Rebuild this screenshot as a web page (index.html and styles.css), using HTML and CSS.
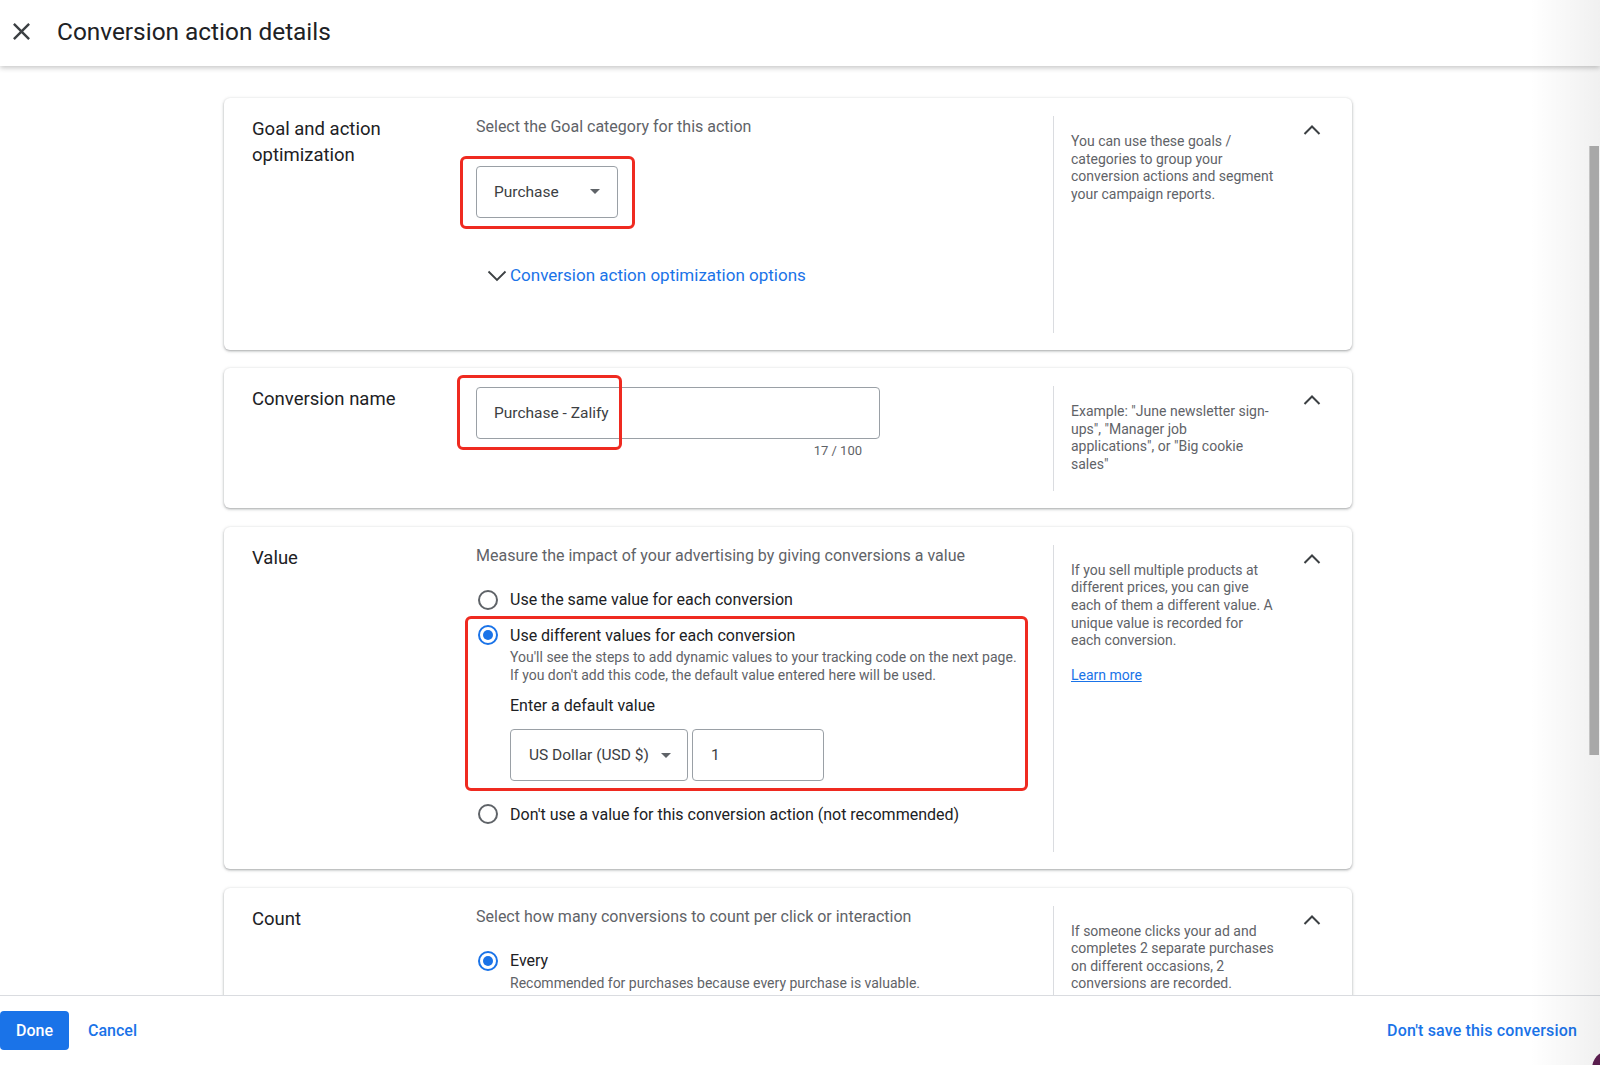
FILE: index.html
```html
<!DOCTYPE html>
<html lang="en">
<head>
<meta charset="utf-8">
<title>Conversion action details</title>
<link rel="stylesheet" href="styles.css">
</head>
<body>
<div class="app">
  <header class="topbar">
    <button class="close" aria-label="Close">
      <svg width="29" height="29" viewBox="0 0 24 24"><path d="M19 6.41L17.59 5 12 10.59 6.41 5 5 6.41 10.59 12 5 17.59 6.41 19 12 13.41 17.59 19 19 17.59 13.41 12z" fill="#3c4043"/></svg>
    </button>
    <h1 class="title">Conversion action details</h1>
  </header>

  <main class="main">
    <section class="card card-goal">
      <div class="card-label">Goal and action optimization</div>
      <div class="card-body">
        <p class="intro">Select the Goal category for this action</p>
        <div class="field select select-goal">
          <span>Purchase</span>
          <svg width="10" height="5" viewBox="0 0 10 5"><path d="M0 0L5 5L10 0z" fill="#5f6368"/></svg>
          <span class="mark mark-goal"></span>
        </div>
        <div class="expand-link">
          <svg class="expand-icon" width="24" height="24" viewBox="0 0 24 24"><path d="M3.5 8.5L12 17L20.5 8.5" fill="none" stroke="#3c4043" stroke-width="1.8"/></svg>
          <span>Conversion action optimization options</span>
        </div>
      </div>
      <aside class="card-side">
        <p class="help">You can use these goals /<br>categories to group your<br>conversion actions and segment<br>your campaign reports.</p>
        <span class="collapse"><svg width="24" height="24" viewBox="0 0 24 24"><path d="M4.5 16L12 8.5L19.5 16" fill="none" stroke="#3c4043" stroke-width="2"/></svg></span>
      </aside>
    </section>

    <section class="card card-name">
      <div class="card-label">Conversion name</div>
      <div class="card-body body-name">
        <div class="field text-field">
          <span>Purchase - Zalify</span>
          <span class="mark mark-name"></span>
        </div>
        <div class="counter">17 / 100</div>
      </div>
      <aside class="card-side">
        <p class="help">Example: "June newsletter sign-<br>ups", "Manager job<br>applications", or "Big cookie<br>sales"</p>
        <span class="collapse"><svg width="24" height="24" viewBox="0 0 24 24"><path d="M4.5 16L12 8.5L19.5 16" fill="none" stroke="#3c4043" stroke-width="2"/></svg></span>
      </aside>
    </section>

    <section class="card card-value">
      <div class="card-label">Value</div>
      <div class="card-body">
        <p class="intro">Measure the impact of your advertising by giving conversions a value</p>
        <div class="radio-row first">
          <span class="radio-wrap"><span class="radio"></span></span>
          <span>Use the same value for each conversion</span>
        </div>
        <div class="group">
          <div class="radio-row">
            <span class="radio-wrap"><span class="radio on"></span></span>
            <span>Use different values for each conversion</span>
          </div>
          <p class="desc">You'll see the steps to add dynamic values to your tracking code on the next page.<br>If you don't add this code, the default value entered here will be used.</p>
          <p class="subhead">Enter a default value</p>
          <div class="value-row">
            <div class="field select currency">
              <span>US Dollar (USD $)</span>
              <svg width="10" height="5" viewBox="0 0 10 5"><path d="M0 0L5 5L10 0z" fill="#5f6368"/></svg>
            </div>
            <div class="field amount"><span>1</span></div>
          </div>
          <span class="mark mark-value"></span>
        </div>
        <div class="radio-row last">
          <span class="radio-wrap"><span class="radio"></span></span>
          <span>Don't use a value for this conversion action (not recommended)</span>
        </div>
      </div>
      <aside class="card-side">
        <p class="help">If you sell multiple products at<br>different prices, you can give<br>each of them a different value. A<br>unique value is recorded for<br>each conversion.<br><br><a class="learn" href="#">Learn more</a></p>
        <span class="collapse"><svg width="24" height="24" viewBox="0 0 24 24"><path d="M4.5 16L12 8.5L19.5 16" fill="none" stroke="#3c4043" stroke-width="2"/></svg></span>
      </aside>
    </section>

    <section class="card card-count">
      <div class="card-label">Count</div>
      <div class="card-body">
        <p class="intro">Select how many conversions to count per click or interaction</p>
        <div class="radio-row first">
          <span class="radio-wrap"><span class="radio on"></span></span>
          <span>Every</span>
        </div>
        <p class="desc">Recommended for purchases because every purchase is valuable.</p>
      </div>
      <aside class="card-side">
        <p class="help">If someone clicks your ad and<br>completes 2 separate purchases<br>on different occasions, 2<br>conversions are recorded.</p>
        <span class="collapse"><svg width="24" height="24" viewBox="0 0 24 24"><path d="M4.5 16L12 8.5L19.5 16" fill="none" stroke="#3c4043" stroke-width="2"/></svg></span>
      </aside>
    </section>
  </main>

  <footer class="footer">
    <button class="btn-done">Done</button>
    <a class="btn-link btn-cancel" href="#">Cancel</a>
    <a class="btn-link btn-discard" href="#">Don't save this conversion</a>
  </footer>

  <div class="edge-shade"></div>
  <div class="scroll-thumb"></div>
  <div class="corner-blob"></div>
</div>
</body>
</html>
```

FILE: styles.css
```css
html, body {
  margin: 0;
  padding: 0;
}
body {
  font-family: Roboto, "Liberation Sans", Arial, sans-serif;
  color: #202124;
  background: #fff;
}
.app {
  position: relative;
  height: 100vh;
  display: flex;
  flex-direction: column;
  overflow: hidden;
}

/* Top bar */
.topbar {
  flex: none;
  height: 66px;
  box-sizing: border-box;
  display: flex;
  align-items: center;
  padding: 0 0 4px 7px;
  background: #fff;
  box-shadow: 0 2px 5px rgba(0, 0, 0, 0.22);
  position: relative;
  z-index: 2;
}
.close {
  width: 29px;
  height: 29px;
  padding: 0;
  border: 0;
  background: none;
  display: flex;
  margin-right: 21px;
}
.title {
  margin: 0;
  font-size: 24.4px;
  font-weight: 400;
  color: #202124;
}

/* Main scroll area */
.main {
  flex: 1;
  overflow: hidden;
  padding: 32px 0 0 224px;
}
.card {
  width: 1128px;
  box-sizing: border-box;
  display: grid;
  grid-template-columns: 224px 577px 271px;
  padding: 18px 28px 17px;
  margin-bottom: 18.5px;
  background: #fff;
  border-radius: 6px;
  box-shadow: 0 1px 2px rgba(60, 64, 67, 0.3), 0 1px 3px 1px rgba(60, 64, 67, 0.15);
}
.card-label {
  font-size: 18.5px;
  font-weight: 400;
  line-height: 26px;
  color: #202124;
  padding-right: 20px;
}
.card-body {
  padding-top: 1px;
}
.intro {
  margin: 0;
  font-size: 16px;
  line-height: 20px;
  color: #5f6368;
}
.card-side {
  border-left: 1px solid #dadce0;
  padding: 0 0 18px 17px;
  display: flex;
  justify-content: space-between;
  align-items: flex-start;
}
.help {
  margin: 0;
  padding-top: 17px;
  font-size: 14px;
  line-height: 17.6px;
  color: #5f6368;
  white-space: nowrap;
}
.learn {
  color: #1a73e8;
  text-decoration: underline;
}
.collapse {
  display: flex;
  margin-top: 2px;
}

/* Fields */
.field {
  position: relative;
  height: 52px;
  box-sizing: border-box;
  border: 1px solid #9aa0a6;
  border-radius: 4px;
  display: flex;
  align-items: center;
  font-size: 15.5px;
  color: #3c4043;
}
.select {
  justify-content: space-between;
}
.select-goal {
  width: 142px;
  margin-top: 28.5px;
  padding: 0 17px 0 17px;
}
.text-field {
  width: 404px;
  padding-left: 17px;
}
.counter {
  width: 404px;
  box-sizing: border-box;
  margin-top: 4px;
  padding-right: 18px;
  text-align: right;
  font-size: 13px;
  line-height: 16px;
  color: #5f6368;
}

/* Red annotation boxes */
.mark {
  position: absolute;
  box-sizing: border-box;
  border: 3px solid #ef2a20;
  border-radius: 6px;
  pointer-events: none;
}
.mark-goal {
  left: -17px;
  top: -11px;
  right: -18px;
  bottom: -12px;
}
.mark-name {
  left: -20px;
  top: -13.5px;
  width: 165px;
  height: 75.5px;
}
.mark-value {
  left: -11px;
  top: -7px;
  right: 25px;
  bottom: -10px;
}

.expand-link {
  display: flex;
  align-items: center;
  margin-top: 45.5px;
  font-size: 17px;
  line-height: 24px;
  color: #1a73e8;
}
.expand-icon {
  margin: 0 1.5px 0 8.5px;
}
.card-goal .card-body {
  padding-bottom: 45.5px;
}

/* Radios */
.radio-row {
  display: flex;
  align-items: center;
  height: 24px;
  font-size: 16px;
  color: #202124;
}
.radio-row.first {
  margin-top: 22px;
}
.radio-row.last {
  margin-top: 21px;
}
.radio-wrap {
  width: 24px;
  height: 24px;
  display: flex;
  align-items: center;
  justify-content: center;
  margin-right: 10px;
}
.radio {
  position: relative;
  width: 20px;
  height: 20px;
  box-sizing: border-box;
  border: 2px solid #5f6368;
  border-radius: 50%;
}
.radio.on {
  border-color: #1a73e8;
}
.radio.on::after {
  content: "";
  position: absolute;
  left: 3px;
  top: 3px;
  width: 10px;
  height: 10px;
  border-radius: 50%;
  background: #1a73e8;
}
.group {
  position: relative;
  margin-top: 11.5px;
}
.desc {
  margin: 2px 0 0 34px;
  font-size: 14px;
  line-height: 17.6px;
  color: #5f6368;
}
.subhead {
  margin: 11px 0 0 34px;
  font-size: 16px;
  line-height: 20px;
  color: #202124;
}
.value-row {
  display: flex;
  gap: 4px;
  margin: 13.5px 0 0 34px;
}
.currency {
  width: 178px;
  padding: 0 16px 0 18px;
}
.amount {
  width: 132px;
  padding-left: 18px;
}
.card-value .card-body {
  padding-bottom: 26px;
}

/* Footer */
.footer {
  flex: none;
  height: 70px;
  box-sizing: border-box;
  border-top: 1px solid #dadce0;
  display: flex;
  align-items: center;
  padding-right: 23px;
  background: #fff;
  position: relative;
  z-index: 2;
  font-size: 16px;
  font-weight: 500;
}
.btn-done {
  width: 69px;
  height: 39px;
  border: 0;
  border-radius: 4px;
  background: #1a73e8;
  color: #fff;
  font-family: inherit;
  font-size: 16px;
  font-weight: 500;
  padding: 0;
}
.btn-link {
  color: #1a73e8;
  text-decoration: none;
}
.btn-cancel {
  margin-left: 19px;
}
.btn-discard {
  margin-left: auto;
  letter-spacing: 0.15px;
}

/* Overlays at the right edge */
.edge-shade {
  position: absolute;
  top: 0;
  right: 0;
  width: 70px;
  height: 100%;
  background: linear-gradient(to right, rgba(0, 0, 0, 0), rgba(0, 0, 0, 0.06));
  pointer-events: none;
  z-index: 3;
}
.scroll-thumb {
  position: absolute;
  top: 146px;
  right: 1px;
  width: 9px;
  height: 609px;
  background: #a8a8a8;
  border-left: 1px solid #c4c4c4;
  z-index: 4;
}
.corner-blob {
  position: absolute;
  right: -24px;
  bottom: -22px;
  width: 32px;
  height: 36px;
  border-radius: 50%;
  background: #5a1e4e;
  z-index: 4;
}
```
